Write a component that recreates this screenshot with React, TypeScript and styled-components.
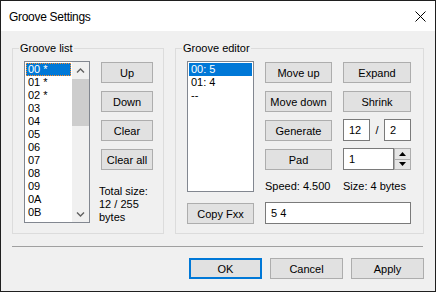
import React from 'react';
import styled, { createGlobalStyle, css } from 'styled-components';

const GlobalStyle = createGlobalStyle`
  html, body {
    margin: 0;
    padding: 0;
    background: #fff;
  }
  body {
    font-family: "Liberation Sans", Arial, sans-serif;
    font-size: 11px;
    color: #000;
  }
`;

const Window = styled.div`
  width: 436px;
  height: 292px;
  box-sizing: border-box;
  border: 1px solid #1f1f1f;
  display: flex;
  flex-direction: column;
  background: #f0f0f0;
`;

const TitleBar = styled.div`
  height: 30px;
  flex: none;
  background: #fff;
  display: flex;
  align-items: center;
  justify-content: space-between;
  padding: 1px 9px 0 8px;
  box-sizing: border-box;
`;

const Title = styled.span`
  font-size: 12px;
  letter-spacing: -0.3px;
`;

const Body = styled.div`
  flex: 1;
  display: flex;
  flex-direction: column;
  padding: 11px 11px 12px;
`;

const Groups = styled.div`
  display: flex;
  gap: 11px;
  height: 192px;
`;

const Group = styled.fieldset<{ $width: number }>`
  margin: 0;
  padding: 0;
  min-width: 0;
  width: ${p => p.$width}px;
  box-sizing: border-box;
  border: 1px solid #dcdcdc;
`;

const Legend = styled.legend`
  margin-left: 6px;
  padding: 0 1px;
  line-height: 13px;
`;

const Grid = styled.div<{ $cols: string; $rows: string }>`
  display: grid;
  grid-template-columns: ${p => p.$cols};
  grid-template-rows: ${p => p.$rows};
  column-gap: 11px;
  row-gap: 7px;
  padding: 6px 0 0 11px;
`;

const ListBox = styled.div<{ $height: number }>`
  grid-column: 1;
  grid-row: 1 / span 5;
  align-self: start;
  height: ${p => p.$height}px;
  box-sizing: border-box;
  border: 1px solid #828790;
  background: #fff;
  display: flex;
  overflow: hidden;
`;

const Items = styled.div`
  flex: 1;
  min-width: 0;
  padding: 1px;
  display: flex;
  flex-direction: column;
`;

const Item = styled.div<{ $selected?: boolean; $focused?: boolean }>`
  height: 13px;
  line-height: 13px;
  padding-left: 2px;
  white-space: nowrap;
  ${p => p.$selected && css`
    background: #0078d7;
    color: #fff;
  `}
  ${p => p.$focused && css`
    outline: 1px dotted #ff8c28;
    outline-offset: -1px;
  `}
`;

const ScrollBar = styled.div`
  width: 17px;
  flex: none;
  display: flex;
  flex-direction: column;
  background: #f0f0f0;
`;

const ScrollArrow = styled.div`
  height: 17px;
  flex: none;
  display: flex;
  align-items: center;
  justify-content: center;
`;

const Thumb = styled.div`
  height: 47px;
  background: #cdcdcd;
`;

const Track = styled.div`
  flex: 1;
`;

const Button = styled.button<{ $default?: boolean; $width?: number }>`
  height: 21px;
  ${p => p.$width && css`width: ${p.$width}px;`}
  align-self: end;
  margin: 0;
  padding: 0;
  box-sizing: border-box;
  border: 1px solid #adadad;
  background: #e1e1e1;
  font: inherit;
  color: #000;
  white-space: nowrap;
  ${p => p.$default && css`
    border: 2px solid #0078d7;
  `}
`;

const InfoText = styled.div`
  grid-column: 2;
  margin: 8px 0 0 -2px;
  line-height: 13px;
`;

const Edit = styled.div<{ $width?: number }>`
  ${p => p.$width && css`width: ${p.$width}px;`}
  height: 22px;
  box-sizing: border-box;
  border: 1px solid #7a7a7a;
  background: #fff;
  padding-left: 5px;
  line-height: 20px;
  flex: none;
`;

const WideEdit = styled(Edit)`
  grid-column: 2 / span 2;
`;

const Cell = styled.div`
  display: flex;
  align-items: center;
`;

const Slash = styled.span`
  flex: 1;
  text-align: center;
`;

const SpinButtons = styled.div`
  width: 17px;
  height: 22px;
  box-sizing: border-box;
  border: 1px solid #adadad;
  display: flex;
  flex-direction: column;
  gap: 1px;
  background: #adadad;
`;

const SpinHalf = styled.div`
  flex: 1;
  display: flex;
  align-items: center;
  justify-content: center;
  background: #e5e5e5;
`;

const Stat = styled.div`
  line-height: 18px;
  white-space: nowrap;
`;

const Separator = styled.div`
  height: 1px;
  margin: 12px 1px 0 0;
  background: #a0a0a0;
`;

const Footer = styled.div`
  display: flex;
  justify-content: flex-end;
  gap: 8px;
  margin-top: 11px;
`;

const Chevron = ({ down }: { down?: boolean }) => (
  <svg width="9" height="6" viewBox="0 0 9 6">
    <path
      d={down ? 'M1 1.5 L4.5 5 L8 1.5' : 'M1 4.5 L4.5 1 L8 4.5'}
      fill="none"
      stroke="#606060"
      strokeWidth="1.4"
    />
  </svg>
);

const Triangle = ({ down }: { down?: boolean }) => (
  <svg width="7" height="4" viewBox="0 0 7 4">
    <path d={down ? 'M0 0 H7 L3.5 4 Z' : 'M0 4 H7 L3.5 0 Z'} fill="#000" />
  </svg>
);

const CloseIcon = () => (
  <svg width="11" height="11" viewBox="0 0 11 11">
    <path d="M0.5 0.5 L10.5 10.5 M10.5 0.5 L0.5 10.5" stroke="#000" strokeWidth="1" />
  </svg>
);

const grooves = ['00 *', '01 *', '02 *', '03', '04', '05', '06', '07', '08', '09', '0A', '0B'];
const entries = ['00: 5', '01: 4', '--'];

const App: React.FC = () => (
  <>
    <GlobalStyle />
    <Window>
      <TitleBar>
        <Title>Groove Settings</Title>
        <CloseIcon />
      </TitleBar>
      <Body>
        <Groups>
          <Group $width={152}>
            <Legend>Groove list</Legend>
            <Grid $cols="66px 52px" $rows="repeat(4, 22px) auto">
              <ListBox $height={162}>
                <Items>
                  {grooves.map((g, i) => (
                    <Item key={g} $selected={i === 0} $focused={i === 0}>{g}</Item>
                  ))}
                </Items>
                <ScrollBar>
                  <ScrollArrow><Chevron /></ScrollArrow>
                  <Thumb />
                  <Track />
                  <ScrollArrow><Chevron down /></ScrollArrow>
                </ScrollBar>
              </ListBox>
              <Button>Up</Button>
              <Button>Down</Button>
              <Button>Clear</Button>
              <Button>Clear all</Button>
              <InfoText>
                Total size:<br />12 / 255<br />bytes
              </InfoText>
            </Grid>
          </Group>
          <Group $width={249}>
            <Legend>Groove editor</Legend>
            <Grid $cols="67px 67px 68px" $rows="repeat(4, 22px) 18px 22px">
              <ListBox $height={131}>
                <Items>
                  {entries.map((e, i) => (
                    <Item key={e} $selected={i === 0}>{e}</Item>
                  ))}
                </Items>
              </ListBox>
              <Button>Move up</Button>
              <Button>Expand</Button>
              <Button>Move down</Button>
              <Button>Shrink</Button>
              <Button>Generate</Button>
              <Cell>
                <Edit $width={27}>12</Edit>
                <Slash>/</Slash>
                <Edit $width={27}>2</Edit>
              </Cell>
              <Button>Pad</Button>
              <Cell>
                <Edit $width={51}>1</Edit>
                <SpinButtons>
                  <SpinHalf><Triangle /></SpinHalf>
                  <SpinHalf><Triangle down /></SpinHalf>
                </SpinButtons>
              </Cell>
              <Stat>Speed: 4.500</Stat>
              <Stat>Size: 4 bytes</Stat>
              <Button>Copy Fxx</Button>
              <WideEdit>5 4</WideEdit>
            </Grid>
          </Group>
        </Groups>
        <Separator />
        <Footer>
          <Button $default $width={73}>OK</Button>
          <Button $width={73}>Cancel</Button>
          <Button $width={73}>Apply</Button>
        </Footer>
      </Body>
    </Window>
  </>
);

export default App;
